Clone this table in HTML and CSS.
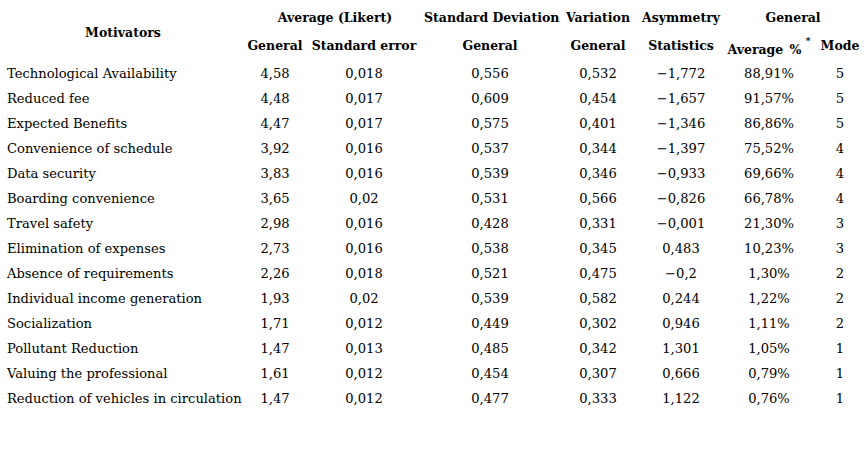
FILE: index.html
```html
<!DOCTYPE html>
<html>
<head>
<meta charset="utf-8">
<link rel="stylesheet" href="styles.css">
</head>
<body>
<table class="data">
  <colgroup>
    <col class="c-mot"><col class="c-gen"><col class="c-se"><col class="c-sd"><col class="c-var"><col class="c-asy"><col class="c-avg"><col class="c-mode">
  </colgroup>
  <thead>
    <tr class="h1">
      <th rowspan="2" class="mot">Motivators</th>
      <th colspan="2">Average (Likert)</th>
      <th>Standard Deviation</th>
      <th>Variation</th>
      <th>Asymmetry</th>
      <th colspan="2">General</th>
    </tr>
    <tr class="h2">
      <th>General</th>
      <th>Standard error</th>
      <th>General</th>
      <th>General</th>
      <th>Statistics</th>
      <th class="avg"><span class="low">Average %</span> <sup>*</sup></th>
      <th>Mode</th>
    </tr>
  </thead>
  <tbody>
    <tr><td>Technological Availability</td><td>4,58</td><td>0,018</td><td>0,556</td><td>0,532</td><td>−1,772</td><td>88,91%</td><td>5</td></tr>
    <tr><td>Reduced fee</td><td>4,48</td><td>0,017</td><td>0,609</td><td>0,454</td><td>−1,657</td><td>91,57%</td><td>5</td></tr>
    <tr><td>Expected Benefits</td><td>4,47</td><td>0,017</td><td>0,575</td><td>0,401</td><td>−1,346</td><td>86,86%</td><td>5</td></tr>
    <tr><td>Convenience of schedule</td><td>3,92</td><td>0,016</td><td>0,537</td><td>0,344</td><td>−1,397</td><td>75,52%</td><td>4</td></tr>
    <tr><td>Data security</td><td>3,83</td><td>0,016</td><td>0,539</td><td>0,346</td><td>−0,933</td><td>69,66%</td><td>4</td></tr>
    <tr><td>Boarding convenience</td><td>3,65</td><td>0,02</td><td>0,531</td><td>0,566</td><td>−0,826</td><td>66,78%</td><td>4</td></tr>
    <tr><td>Travel safety</td><td>2,98</td><td>0,016</td><td>0,428</td><td>0,331</td><td>−0,001</td><td>21,30%</td><td>3</td></tr>
    <tr><td>Elimination of expenses</td><td>2,73</td><td>0,016</td><td>0,538</td><td>0,345</td><td>0,483</td><td>10,23%</td><td>3</td></tr>
    <tr><td>Absence of requirements</td><td>2,26</td><td>0,018</td><td>0,521</td><td>0,475</td><td>−0,2</td><td>1,30%</td><td>2</td></tr>
    <tr><td>Individual income generation</td><td>1,93</td><td>0,02</td><td>0,539</td><td>0,582</td><td>0,244</td><td>1,22%</td><td>2</td></tr>
    <tr><td>Socialization</td><td>1,71</td><td>0,012</td><td>0,449</td><td>0,302</td><td>0,946</td><td>1,11%</td><td>2</td></tr>
    <tr><td>Pollutant Reduction</td><td>1,47</td><td>0,013</td><td>0,485</td><td>0,342</td><td>1,301</td><td>1,05%</td><td>1</td></tr>
    <tr><td>Valuing the professional</td><td>1,61</td><td>0,012</td><td>0,454</td><td>0,307</td><td>0,666</td><td>0,79%</td><td>1</td></tr>
    <tr><td>Reduction of vehicles in circulation</td><td>1,47</td><td>0,012</td><td>0,477</td><td>0,333</td><td>1,122</td><td>0,76%</td><td>1</td></tr>
  </tbody>
</table>
</body>
</html>
```

FILE: styles.css
```css
html, body {
  margin: 0;
  padding: 0;
  background: #ffffff;
}
body {
  padding: 3px 0 0 0;
  font-family: "DejaVu Serif", serif;
  color: #000;
}
.data {
  border-collapse: collapse;
  table-layout: fixed;
  width: 864px;
}
.c-mot { width: 246px; }
.c-gen { width: 58px; }
.c-se { width: 120px; }
.c-sd { width: 132px; }
.c-var { width: 84px; }
.c-asy { width: 82px; }
.c-avg { width: 94px; }
.c-mode { width: 48px; }
.data th {
  font-weight: bold;
  font-size: 12.5px;
  text-align: center;
  padding: 0;
  white-space: nowrap;
  height: 28px;
}
.data .h2 th {
  padding-bottom: 2px;
}
.data td {
  font-size: 13.1px;
  text-align: center;
  padding: 0;
  height: 25px;
  white-space: nowrap;
}
.data td:first-child {
  text-align: left;
  padding-left: 7px;
}
.data .avg .low {
  position: relative;
  top: 2px;
  word-spacing: 2px;
}
.data sup {
  font-size: 9px;
  vertical-align: 8px;
}
```
